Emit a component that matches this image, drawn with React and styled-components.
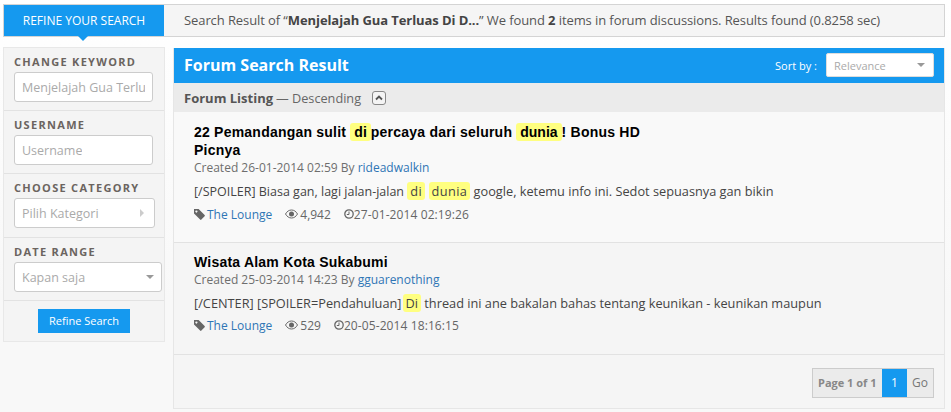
import React from 'react';
import styled, { createGlobalStyle } from 'styled-components';

const Global = createGlobalStyle`
  html, body { margin: 0; padding: 0; }
  body { background: linear-gradient(#ffffff, #f8f8f8 300px); font-family: "Open Sans", sans-serif; color: #555; }
  #root { width: 951px; height: 412px; overflow: hidden; }
`;

const Page = styled.div`
  padding: 4px 6px 0 3px;
  display: flex;
  flex-direction: column;
  gap: 10px;
`;
const TopBar = styled.div`
  display: flex;
  height: 31px;
  border: 1px solid #d4d4d4;
  background: #f5f5f5;
`;
const TopTab = styled.div`
  position: relative;
  flex: none;
  width: 160px;
  background: #1599ef;
  color: #fff;
  font-size: 12px;
  line-height: 31px;
  text-align: center;
  &::after {
    content: '';
    position: absolute;
    left: 74px;
    top: 31px;
    border: 5px solid transparent;
    border-bottom: 0;
    border-top-color: #1599ef;
  }
`;
const TopText = styled.div`
  padding-left: 20px;
  font-size: 13px;
  letter-spacing: -0.09px;
  line-height: 30px;
  color: #555;
  white-space: nowrap;
  b { color: #444; }
`;
const Columns = styled.div`
  display: flex;
  align-items: flex-start;
  gap: 8px;
`;
const Sidebar = styled.aside`
  flex: none;
  box-sizing: border-box;
  width: 162px;
  border: 1px solid #e8e8e8;
  background: #f4f4f4;
`;
const Group = styled.div`
  box-sizing: border-box;
  height: ${p => p.$h}px;
  padding: 7px 10px 0;
  border-bottom: 1px solid #e2e2e2;
`;
const GroupLabel = styled.div`
  font-size: 11px;
  font-weight: 700;
  line-height: 13px;
  letter-spacing: 1.3px;
  color: #6b6460;
  margin-bottom: 4px;
`;
const Field = styled.div`
  display: flex;
  align-items: center;
  justify-content: space-between;
  box-sizing: border-box;
  width: ${p => p.$w}px;
  height: 30px;
  padding: 0 7px;
  background: #fff;
  border: 1px solid #ccc;
  border-radius: 3px;
  font-size: 12.5px;
  color: #aaa;
  white-space: nowrap;
`;
const FieldText = styled.span`
  overflow: hidden;
`;
const CaretDown = styled.i`
  flex: none;
  border: 4px solid transparent;
  border-bottom: 0;
  border-top-color: #999;
`;
const CaretRight = styled.i`
  flex: none;
  margin-right: 3px;
  border: 4px solid transparent;
  border-right: 0;
  border-left-color: #ccc;
`;
const RefineWrap = styled.div`
  display: flex;
  justify-content: center;
  padding: 8px 0;
`;
const RefineButton = styled.button`
  width: 92px;
  height: 24px;
  padding: 0 0 1px;
  border: 0;
  background: #1599ef;
  color: #fff;
  font: 11px "Open Sans", sans-serif;
`;
const Main = styled.main`
  flex: none;
  box-sizing: border-box;
  width: 772px;
  border: 1px solid #e6e6e6;
  border-top: 0;
  margin-top: 1px;
  background: #f5f5f5;
`;
const MainHeader = styled.div`
  display: flex;
  align-items: center;
  justify-content: space-between;
  box-sizing: border-box;
  height: 35px;
  padding: 0 10px 1px;
  background: #1599ef;
  color: #fff;
`;
const MainTitle = styled.h1`
  margin: 0 0 1px;
  font-size: 16px;
  font-weight: 700;
`;
const SortBox = styled.div`
  display: flex;
  align-items: center;
  gap: 9px;
  font-size: 11px;
`;
const SortField = styled.div`
  display: flex;
  align-items: center;
  justify-content: space-between;
  box-sizing: border-box;
  width: 108px;
  height: 24px;
  padding: 0 8px 0 7px;
  background: #fff;
  border: 1px solid #ddd;
  border-radius: 2px;
  color: #aaa;
`;
const ListingBar = styled.div`
  display: flex;
  align-items: center;
  height: 29px;
  padding-left: 10px;
  background: #ebebeb;
  font-size: 13px;
  color: #666;
  b { color: #555; margin-right: 3px; }
`;
const ListingOrder = styled.span`
  font-size: 12.7px;
`;
const Toggle = styled.span`
  display: inline-flex;
  align-items: center;
  justify-content: center;
  box-sizing: border-box;
  width: 14px;
  height: 14px;
  margin-left: 11px;
  border: 1px solid #888;
  border-radius: 3px;
  background: #f4f4f4;
`;
const Item = styled.article`
  padding: ${p => p.$first ? '11px' : '10px'} 20px 0;
  height: ${p => p.$h}px;
  box-sizing: border-box;
  background: ${p => p.$first ? '#f9f9f9' : '#f5f5f5'};
  border-bottom: 1px solid #e2e2e2;
`;
const ItemTitle = styled.h2`
  margin: 0;
  width: 460px;
  font: bold 14px/18px "Liberation Sans", Arial, sans-serif;
  letter-spacing: 0.22px;
  color: #000;
`;
const Mark = styled.span`
  display: inline-block;
  background: #ffff80;
  border-radius: 3px;
  padding: 0 ${p => p.$pad}px;
  margin-left: ${p => p.$offset || 0}px;
  letter-spacing: ${p => p.$track || 0}px;
`;
const Meta = styled.div`
  font-size: 12px;
  line-height: 18px;
  color: #6e6e6e;
  a { color: #2f76b5; text-decoration: none; }
`;
const Excerpt = styled.div`
  margin-top: 5px;
  font-size: 12.75px;
  line-height: 18px;
  color: #444;
  white-space: nowrap;
`;
const ExcerptLead = styled.span`
  font-size: 12.5px;
`;
const Stats = styled.div`
  display: flex;
  align-items: center;
  margin-top: 3px;
  height: 20px;
  font-size: 12px;
  color: #666;
  a { color: #2f76b5; text-decoration: none; margin-left: 2px; }
`;
const Stat = styled.span`
  display: inline-flex;
  align-items: center;
  margin-left: ${p => p.$gap}px;
  letter-spacing: ${p => p.$track || 0}px;
  svg { margin-right: ${p => p.$iconGap}px; }
`;
const Footer = styled.div`
  display: flex;
  justify-content: flex-end;
  height: 53px;
  box-sizing: border-box;
  padding: 13px 10px 0 0;
`;
const Pager = styled.div`
  display: flex;
  height: 30px;
  box-sizing: border-box;
  border: 1px solid #ccc;
  background: #ebebeb;
  font-size: 12px;
  line-height: 28px;
  color: #777;
`;
const PagerLabel = styled.span`
  width: 69px;
  box-sizing: border-box;
  padding-left: 5px;
  font-size: 11px;
  font-weight: 700;
  color: #888;
`;
const PagerCurrent = styled.span`
  width: 25px;
  text-align: center;
  background: #1599ef;
  color: #fff;
`;
const PagerGo = styled.span`
  width: 26px;
  text-align: center;
`;

const ChevronUp = () => (
  <svg width="8" height="6" viewBox="0 0 8 6"><path d="M1 4.500L4 1.500L7 4.500" fill="none" stroke="#555" strokeWidth="1.800" /></svg>
);
const TagIcon = () => (
  <svg width="11" height="11" viewBox="0 0 11 11"><path d="M0 0h4.6l6 6a1 1 0 0 1 0 1.3L7.4 10.6a1 1 0 0 1-1.3 0L0 4.6zM2.4 1.4a1 1 0 1 0 .01 0z" fill="#666" fillRule="evenodd" /></svg>
);
const EyeIcon = () => (
  <svg width="13" height="10" viewBox="0 0 13 10"><path d="M.5 5C2 2.4 4 1 6.5 1s4.500 1.400 6 4c-1.500 2.600-3.500 4-6 4S2 7.600.5 5z" fill="none" stroke="#666" /><circle cx="6.500" cy="5" r="2.500" fill="#666" /></svg>
);
const ClockIcon = () => (
  <svg width="10" height="10" viewBox="0 0 10 10"><circle cx="5" cy="5" r="4.200" fill="none" stroke="#666" strokeWidth="1.300" /><path d="M5 2.500V5.500H2.800" fill="none" stroke="#666" /></svg>
);

const StatsRow = ({ views, date }) => (
  <Stats>
    <TagIcon /><a href="#">The Lounge</a>
    <Stat $gap={13} $iconGap={2}><EyeIcon />{views}</Stat>
    <Stat $gap={13} $iconGap={0} $track={0.1}><ClockIcon />{date}</Stat>
  </Stats>
);

export default function App() {
  return (
    <Page>
      <Global />
      <TopBar>
        <TopTab>REFINE YOUR SEARCH</TopTab>
        <TopText>Search Result of “<b>Menjelajah Gua Terluas Di D...</b>” We found <b>2</b> items in forum discussions. Results found (0.8258 sec)</TopText>
      </TopBar>
      <Columns>
        <Sidebar>
          <Group $h={63}><GroupLabel>CHANGE KEYWORD</GroupLabel><Field $w={139}><FieldText>Menjelajah Gua Terlu</FieldText></Field></Group>
          <Group $h={63}><GroupLabel>USERNAME</GroupLabel><Field $w={139}><FieldText>Username</FieldText></Field></Group>
          <Group $h={64}><GroupLabel>CHOOSE CATEGORY</GroupLabel><Field $w={141}><FieldText>Pilih Kategori</FieldText><CaretRight /></Field></Group>
          <Group $h={63}><GroupLabel>DATE RANGE</GroupLabel><Field $w={148}><FieldText>Kapan saja</FieldText><CaretDown /></Field></Group>
          <RefineWrap><RefineButton>Refine Search</RefineButton></RefineWrap>
        </Sidebar>
        <Main>
          <MainHeader>
            <MainTitle>Forum Search Result</MainTitle>
            <SortBox>Sort by :<SortField>Relevance<CaretDown /></SortField></SortBox>
          </MainHeader>
          <ListingBar><b>Forum Listing</b><ListingOrder>— Descending</ListingOrder><Toggle><ChevronUp /></Toggle></ListingBar>
          <Item $first $h={131}>
            <ItemTitle>22 Pemandangan sulit <Mark $pad={4}>di</Mark>percaya dari seluruh <Mark $pad={4}>dunia</Mark>! Bonus HD Picnya</ItemTitle>
            <Meta>Created 26-01-2014 02:59 By <a href="#">rideadwalkin</a></Meta>
            <Excerpt><ExcerptLead>[/SPOILER] Biasa gan, lagi jalan-jalan</ExcerptLead> <Mark $pad={3} $track={0.4}>di</Mark> <Mark $pad={3} $track={0.4}>dunia</Mark> google, ketemu info ini. Sedot sepuasnya gan bikin</Excerpt>
            <StatsRow views="4,942" date="27-01-2014 02:19:26" />
          </Item>
          <Item $h={112}>
            <ItemTitle>Wisata Alam Kota Sukabumi</ItemTitle>
            <Meta>Created 25-03-2014 14:23 By <a href="#">gguarenothing</a></Meta>
            <Excerpt>[/CENTER] [SPOILER=Pendahuluan]<Mark $pad={3} $offset={1}>Di</Mark> thread ini ane bakalan bahas tentang keunikan - keunikan maupun</Excerpt>
            <StatsRow views="529" date="20-05-2014 18:16:15" />
          </Item>
          <Footer>
            <Pager><PagerLabel>Page 1 of 1</PagerLabel><PagerCurrent>1</PagerCurrent><PagerGo>Go</PagerGo></Pager>
          </Footer>
        </Main>
      </Columns>
    </Page>
  );
}
